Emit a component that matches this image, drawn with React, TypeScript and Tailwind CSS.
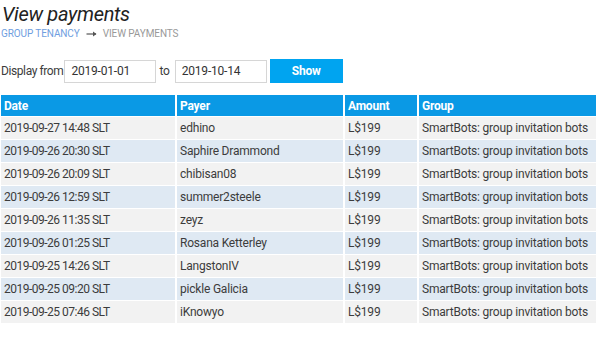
import React from "react";

const rows = [
  ["2019-09-27 14:48 SLT", "edhino"],
  ["2019-09-26 20:30 SLT", "Saphire Drammond"],
  ["2019-09-26 20:09 SLT", "chibisan08"],
  ["2019-09-26 12:59 SLT", "summer2steele"],
  ["2019-09-26 11:35 SLT", "zeyz"],
  ["2019-09-26 01:25 SLT", "Rosana Ketterley"],
  ["2019-09-25 14:26 SLT", "LangstonIV"],
  ["2019-09-25 09:20 SLT", "pickle Galicia"],
  ["2019-09-25 07:46 SLT", "iKnowyo"],
];

export default function App() {
  return (
    <div
      className="w-[600px] h-[341px] bg-white text-[#3c3c3c] overflow-hidden tracking-[-0.2px]"
      style={{ fontFamily: 'Roboto, "Open Sans", sans-serif' }}
    >
      <div className="pl-[2px]">
        <h1 className="text-[20px] leading-[28px] italic font-normal text-[#222] tracking-[-0.3px]">View payments</h1>
        <div className="flex items-center text-[10px] leading-[12px] uppercase tracking-[-0.1px] -ml-[1px]">
          <span className="text-[#6f9ee0]">Group Tenancy</span>
          <svg width="12" height="8" viewBox="0 0 12 8" className="ml-[6px] mr-[5px]">
            <path d="M0.5 4H10" stroke="#555" strokeWidth="1.2" />
            <path d="M7 1.5L10.5 4L7 6.5Z" fill="#555" />
          </svg>
          <span className="text-[#999]">View payments</span>
        </div>
      </div>
      <div className="flex items-center mt-[19px] text-[12px]">
        <span className="ml-[1px] mr-[1px] tracking-[-0.4px]">Display from</span>
        <input
          defaultValue="2019-01-01"
          className="w-[92px] h-[23px] border border-[#d6d6d6] px-[6px] text-[12px] text-[#333] outline-none tracking-[-0.2px]"
        />
        <span className="ml-[3px] mr-[5px]">to</span>
        <input
          defaultValue="2019-10-14"
          className="w-[92px] h-[23px] border border-[#d6d6d6] px-[6px] text-[12px] text-[#333] outline-none tracking-[-0.2px]"
        />
        <button className="ml-[3px] w-[73px] h-[24px] bg-[#00a4f0] text-white font-bold text-[12px]">
          Show
        </button>
      </div>
      <table className="mt-[11px] -ml-[1px] table-fixed w-[599px] border-separate border-spacing-x-[2px] border-spacing-y-[1px] text-[12px] whitespace-nowrap">
        <thead>
          <tr className="bg-[#0a99e5] text-white h-[21px]">
            <th className="w-[174px] text-left px-[3px] font-bold">Date</th>
            <th className="w-[166px] text-left px-[3px] font-bold">Payer</th>
            <th className="w-[72px] text-left px-[3px] font-bold">Amount</th>
            <th className="text-left px-[3px] font-bold">Group</th>
          </tr>
        </thead>
        <tbody>
          {rows.map((r, i) => (
            <tr key={i} className={i % 2 === 0 ? "bg-[#f2f2f2] h-[22px]" : "bg-[#dfe9f3] h-[22px]"}>
              <td className="px-[3px] tracking-[-0.5px]">{r[0]}</td>
              <td className="px-[3px]">{r[1]}</td>
              <td className="px-[3px]">L$199</td>
              <td className="px-[3px]">SmartBots: group invitation bots</td>
            </tr>
          ))}
        </tbody>
      </table>
    </div>
  );
}
